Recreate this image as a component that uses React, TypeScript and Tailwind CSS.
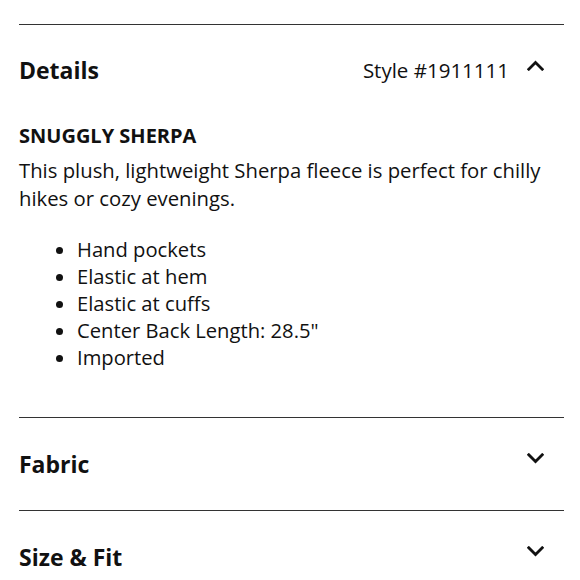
const bullets = [
  'Hand pockets',
  'Elastic at hem',
  'Elastic at cuffs',
  'Center Back Length: 28.5"',
  'Imported',
];

const Chevron = ({ up }: { up?: boolean }) => (
  <svg width="17" height="11" viewBox="0 0 17 11" fill="none" className="block">
    <polyline
      points={up ? '1.8,9.2 8.5,2.5 15.2,9.2' : '1.8,1.8 8.5,8.5 15.2,1.8'}
      stroke="#111"
      strokeWidth="2.8"
      strokeLinecap="square"
    />
  </svg>
);

const Section = ({ title }: { title: string }) => (
  <div className="border-t border-[#333] h-[93px] flex items-center justify-between">
    <h2 className="text-[23px] leading-[30px] font-bold">{title}</h2>
    <div className="mr-[20px] -mt-[12px]">
      <Chevron />
    </div>
  </div>
);

export default function App() {
  return (
    <div
      className="bg-white text-[#111] h-[580px] pt-[24px] pl-[19px] pr-[16px] overflow-hidden"
      style={{ fontFamily: '"Open Sans", "Noto Sans", sans-serif' }}
    >
      <div className="border-t border-[#333]">
        <div className="h-[93px] pb-[4px] flex items-center justify-between">
          <h2 className="text-[23px] leading-[30px] font-bold">Details</h2>
          <div className="flex items-center gap-[18px] mr-[20px]">
            <span className="text-[20.5px] leading-[30px]">Style #1911111</span>
            <div className="-mt-[9px]">
              <Chevron up />
            </div>
          </div>
        </div>
        <h3 className="mt-[5px] text-[20px] leading-[26px] font-bold">SNUGGLY SHERPA</h3>
        <p className="mt-[7px] text-[20.3px] leading-[28px] pr-[10px]">
          This plush, lightweight Sherpa fleece is perfect for chilly hikes or cozy evenings.
        </p>
        <ul className="mt-[24px] mb-[46px] pl-[58px] list-disc text-[20.2px] leading-[27px]">
          {bullets.map((b) => (
            <li key={b}>{b}</li>
          ))}
        </ul>
      </div>
      <Section title="Fabric" />
      <Section title="Size & Fit" />
    </div>
  );
}
